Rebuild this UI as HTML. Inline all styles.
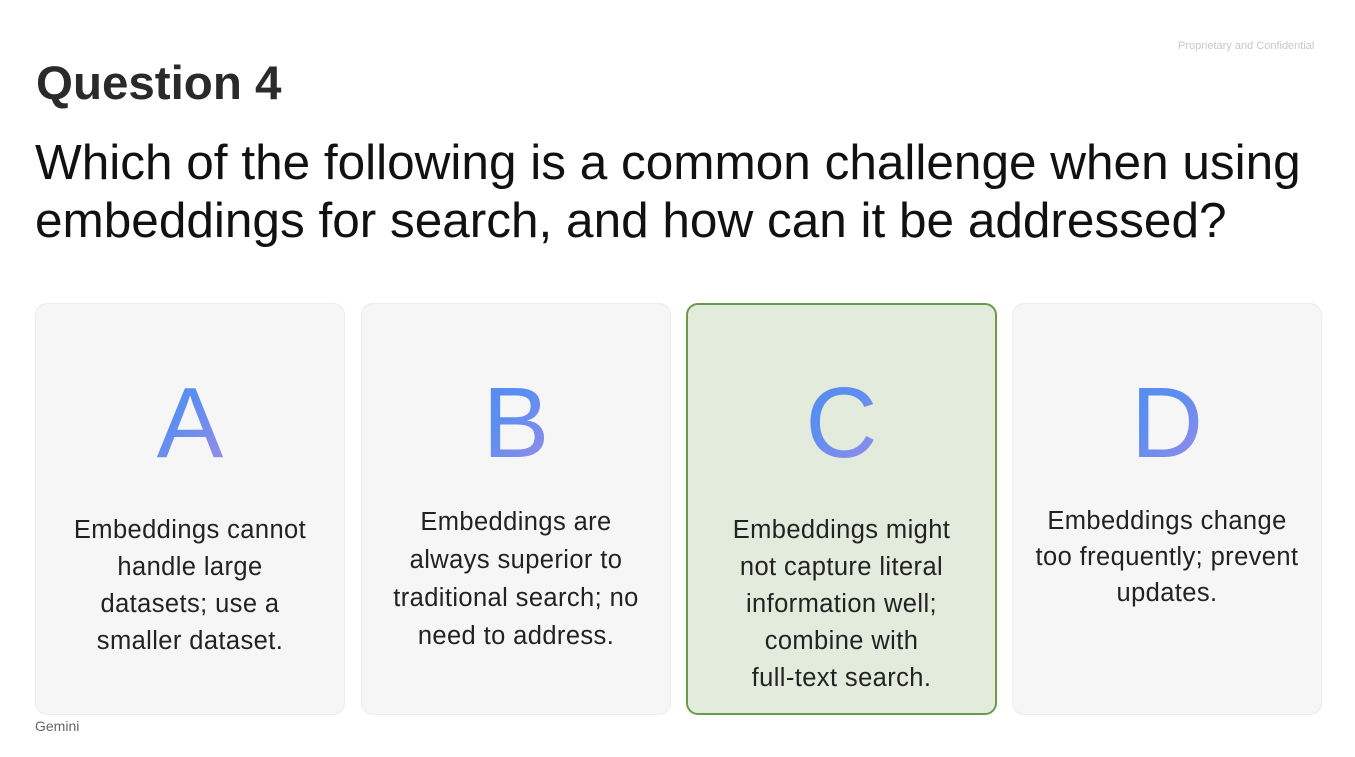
<!DOCTYPE html>
<html><head><meta charset="utf-8"><style>
html,body{margin:0;padding:0;background:#fff;}
body{width:1355px;height:757px;position:relative;overflow:hidden;font-family:"Liberation Sans",sans-serif;color:#1f1f1f;}
.conf{position:absolute;left:1178px;top:40px;font-size:11px;color:#c8c8c8;}
h1{position:absolute;left:36px;top:58px;margin:0;font-size:47.5px;font-weight:bold;color:#2a2a2a;line-height:52px;}
.q{position:absolute;left:35px;top:134px;margin:0;font-size:49.5px;line-height:58px;white-space:nowrap;color:#111;}
.card{position:absolute;top:303px;width:310px;height:412px;border:1px solid #ececec;border-radius:12px;background:#f6f6f6;box-sizing:border-box;}
.card.sel{background:#e3ecdc;border:2px solid #6a9a4e;}
.L{position:absolute;left:0;right:0;top:64px;text-align:center;font-size:100px;line-height:110px;font-weight:normal;
 background:linear-gradient(135deg,#4a8af0 0%,#5b8ef0 45%,#a98be8 75%,#d9769c 100%);-webkit-background-clip:text;background-clip:text;color:transparent;}
.t{position:absolute;left:-10px;right:-10px;text-align:center;font-size:25.5px;letter-spacing:0.4px;line-height:37px;color:#222;}
.gem{position:absolute;left:35px;top:718px;font-size:14px;color:#666;}
</style></head><body>
<div class="conf">Proprietary and Confidential</div>
<h1>Question 4</h1>
<div class="q">Which of the following is a common challenge when using<br>embeddings for search, and how can it be addressed?</div>

<div class="card" style="left:35px"><div class="L">A</div><div class="t" style="top:208px">Embeddings cannot<br>handle large<br>datasets; use a<br>smaller dataset.</div></div>
<div class="card" style="left:361px"><div class="L">B</div><div class="t" style="top:199px;line-height:38px">Embeddings are<br>always superior to<br>traditional search; no<br>need to address.</div></div>
<div class="card sel" style="left:686px;width:311px;"><div class="L" style="top:63px">C</div><div class="t" style="top:207px">Embeddings might<br>not capture literal<br>information well;<br>combine with<br>full-text search.</div></div>
<div class="card" style="left:1012px"><div class="L">D</div><div class="t" style="top:199px;line-height:36px">Embeddings change<br>too frequently; prevent<br>updates.</div></div>

<div class="gem">Gemini</div>
</body></html>
